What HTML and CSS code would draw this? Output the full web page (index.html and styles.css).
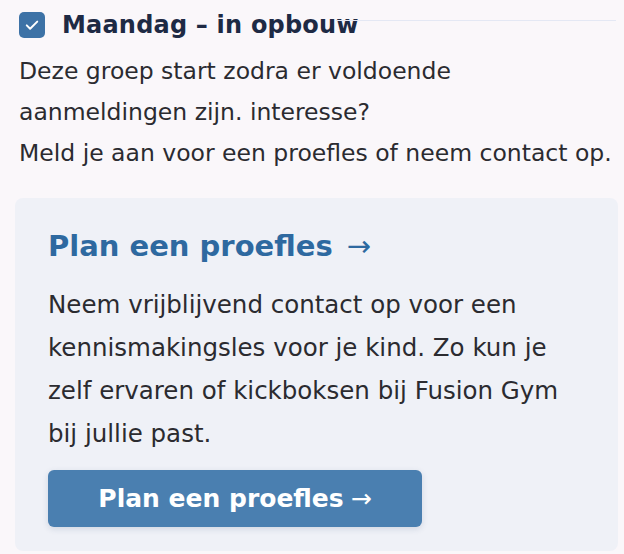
FILE: index.html
```html
<!DOCTYPE html>
<html lang="nl">
<head>
<meta charset="utf-8">
<link rel="stylesheet" href="styles.css">
</head>
<body>
<section class="group">
  <div class="group-head">
    <span class="check"><svg viewBox="0 0 24 24" width="18" height="18"><path d="M5 12.5l4.5 4.5L19 7.5" fill="none" stroke="#fff" stroke-width="2.6" stroke-linecap="round" stroke-linejoin="round"/></svg></span>
    <h2 class="group-title">Maandag – in opbouw</h2>
    <span class="head-rule"></span>
  </div>
  <p class="group-text">Deze groep start zodra er voldoende<br>aanmeldingen zijn. interesse?<br>Meld je aan voor een proefles of neem contact op.</p>
</section>
<section class="cta">
  <h3 class="cta-title">Plan een proefles <span class="arrow">→</span></h3>
  <p class="cta-text">Neem vrijblijvend contact op voor een<br>kennismakingsles voor je kind. Zo kun je<br>zelf ervaren of kickboksen bij Fusion Gym<br>bij jullie past.</p>
  <a class="cta-button" href="#">Plan een proefles <span class="arrow">→</span></a>
</section>
</body>
</html>
```
FILE: styles.css
```css
html, body {
  margin: 0;
  padding: 0;
}
body {
  background: #faf7fa;
  font-family: "DejaVu Sans", "Noto Sans", sans-serif;
  color: #2b2b30;
  width: 624px;
  height: 554px;
  overflow: hidden;
}
.group {
  padding: 10px 0 0 19px;
}
.group-head {
  display: flex;
  align-items: center;
  gap: 17px;
  height: 30px;
  margin-right: 8px;
}
.check {
  width: 26px;
  height: 26px;
  border-radius: 5px;
  background: #3d72a6;
  display: flex;
  align-items: center;
  justify-content: center;
  flex: none;
}
.group-title {
  margin: 0;
  font-size: 24px;
  font-weight: 700;
  letter-spacing: 0.2px;
  color: #1e2a44;
  white-space: nowrap;
}
.head-rule {
  flex: 1;
  height: 1px;
  background: #e4e8f4;
  align-self: flex-start;
  margin-top: 10px;
  margin-left: -40px;
}
.group-text {
  margin: 11px 0 0;
  font-size: 23.5px;
  line-height: 41px;
  white-space: nowrap;
}
.cta {
  margin: 24px 6px 0 15px;
  background: #eff1f7;
  border-radius: 8px;
  padding: 27px 20px 23px 33px;
  height: 353px;
  box-sizing: border-box;
}
.cta-title {
  margin: 0;
  font-size: 29px;
  font-weight: 700;
  color: #2e69a0;
  line-height: 42px;
  white-space: nowrap;
}
.arrow {
  font-weight: 400;
  margin-left: 4px;
}
.cta-text {
  margin: 16px 0 0;
  font-size: 24.5px;
  line-height: 43px;
  color: #2b2b30;
  white-space: nowrap;
}
.cta-button {
  display: inline-flex;
  align-items: center;
  justify-content: center;
  gap: 3px;
  margin-top: 15px;
  width: 374px;
  height: 57px;
  box-sizing: border-box;
  background: #4a7fb0;
  border-radius: 6px;
  color: #fff;
  font-size: 25px;
  font-weight: 700;
  text-decoration: none;
  box-shadow: 0 2px 6px rgba(40, 70, 110, 0.15);
}
```
